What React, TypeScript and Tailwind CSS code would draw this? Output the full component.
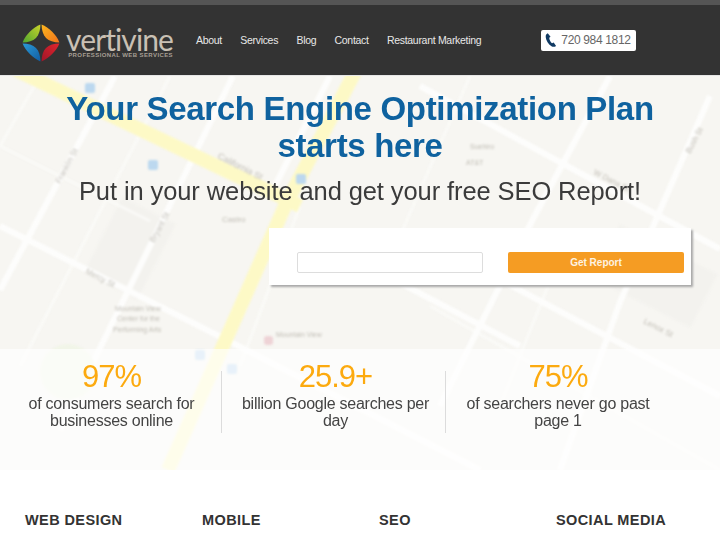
const navLinks = ["About", "Services", "Blog", "Contact", "Restaurant Marketing"];

const stats = [
  { value: "97%", label: "of consumers search for businesses online", box: "w-[222px] border-r pl-[2px]" },
  { value: "25.9+", label: "billion Google searches per day", box: "w-[224px] border-r pl-[4px]" },
  { value: "75%", label: "of searchers never go past page 1", box: "w-[226px] pr-[2px]" },
];

const services = ["WEB DESIGN", "MOBILE", "SEO", "SOCIAL MEDIA"];

const streets = [
  "M115 0 L0 214",
  "M233 0 L60 354",
  "M0 150 L213 257 L480 394",
  "M420 10 L720 173",
  "M493 200 L720 320",
  "M610 0 L533 143 L440 330",
  "M710 20 L620 226 L560 394",
  "M330 0 L270 120",
  "M330 170 L520 270",
];

const thinStreets = [
  "M40 0 L0 70",
  "M170 0 L20 290",
  "M0 70 L150 145",
  "M300 130 L240 290",
  "M470 0 L400 160",
  "M560 180 L500 330",
  "M430 230 L720 394",
];

const mapLabels = [
  { text: "California St", x: 217, y: 82, r: 27, size: 9 },
  { text: "Franklin St", x: 60, y: 108, r: -62, size: 8 },
  { text: "Bryant St", x: 154, y: 167, r: -62, size: 8 },
  { text: "Mercy St", x: 85, y: 197, r: 27, size: 8 },
  { text: "Castro", x: 222, y: 146, r: 0, size: 8 },
  { text: "Mountain View", x: 115, y: 235, r: 0, size: 7 },
  { text: "Center for the", x: 117, y: 245, r: 0, size: 7 },
  { text: "Performing Arts", x: 113, y: 256, r: 0, size: 7 },
  { text: "Mountain View", x: 276, y: 261, r: 0, size: 7 },
  { text: "Suehiro", x: 470, y: 73, r: 0, size: 7 },
  { text: "AT&T", x: 466, y: 89, r: 0, size: 7 },
  { text: "W Dana St", x: 593, y: 98, r: 27, size: 8 },
  { text: "Bush St", x: 690, y: 78, r: -62, size: 8 },
  { text: "Lenox St", x: 643, y: 247, r: 27, size: 8 },
];

const markers = [
  { x: 85, y: 7 },
  { x: 148, y: 84 },
  { x: 296, y: 98 },
  { x: 195, y: 274 },
  { x: 227, y: 288 },
];

function MapBackground() {
  return (
    <svg viewBox="0 0 720 394" className="absolute inset-0 h-full w-full" aria-hidden="true">
      <rect width="720" height="394" fill="#f7f6f2" />
      <g filter="blur(1.3px)">
        <rect x="100" y="130" width="60" height="85" fill="#f3f2ee" transform="rotate(27 130 172)" />
        <rect x="600" y="170" width="110" height="60" fill="#f3f2ee" transform="rotate(27 655 200)" />
        <g stroke="#fafaf7" strokeWidth="3" fill="none">
          {thinStreets.map((d) => (
            <path key={d} d={d} />
          ))}
        </g>
        <g stroke="#fdfdfc" strokeWidth="6" fill="none">
          {streets.map((d) => (
            <path key={d} d={d} />
          ))}
        </g>
        <g stroke="#fdf9c6" strokeWidth="14" fill="none">
          <path d="M16 -6 L300 130" />
          <path d="M356 -6 L285 130 L168 394" />
        </g>
        {mapLabels.map((l) => (
          <text
            key={l.text + l.x}
            x={l.x}
            y={l.y}
            fontSize={l.size}
            fill="#c0bdb5"
            fontFamily="'Liberation Sans', sans-serif"
            transform={`rotate(${l.r} ${l.x} ${l.y})`}
          >
            {l.text}
          </text>
        ))}
        {markers.map((m) => (
          <rect key={m.x} x={m.x} y={m.y} width="10" height="10" rx="2" fill="#bcd8ef" />
        ))}
        <rect x="264" y="260" width="9" height="9" rx="3" fill="#eed3d6" />
        <circle cx="68" cy="296" r="28" fill="#f1f5e8" />
      </g>
    </svg>
  );
}

function Logo() {
  return (
    <div className="flex items-center pt-[4px]">
      <svg width="38" height="38" viewBox="0 0 38 38" aria-hidden="true">
        <defs>
          <linearGradient id="petalGreen" x1="0" y1="1" x2="1" y2="0">
            <stop offset="0" stopColor="#4fa62f" />
            <stop offset="1" stopColor="#c9d32b" />
          </linearGradient>
          <linearGradient id="petalOrange" x1="0" y1="0" x2="1" y2="1">
            <stop offset="0" stopColor="#fbb61e" />
            <stop offset="1" stopColor="#f2731c" />
          </linearGradient>
          <linearGradient id="petalBlue" x1="0" y1="0" x2="1" y2="1">
            <stop offset="0" stopColor="#2a9ad6" />
            <stop offset="1" stopColor="#125da3" />
          </linearGradient>
          <linearGradient id="petalRed" x1="1" y1="0" x2="0" y2="1">
            <stop offset="0" stopColor="#e0252d" />
            <stop offset="1" stopColor="#a01628" />
          </linearGradient>
        </defs>
        <path d="M18.4 .6 C11 3.5 3.5 11 .6 18.4 C6 18.4 11 17 14 14 C17 11 18.4 6 18.4 .6 Z" fill="url(#petalGreen)" />
        <path d="M19.6 .6 C27 3.5 34.5 11 37.4 18.4 C32 18.4 27 17 24 14 C21 11 19.6 6 19.6 .6 Z" fill="url(#petalOrange)" />
        <path d="M.6 19.6 C3.5 27 11 34.5 18.4 37.4 C18.4 32 17 27 14 24 C11 21 6 19.6 .6 19.6 Z" fill="url(#petalBlue)" />
        <path d="M37.4 19.6 C34.5 27 27 34.5 19.6 37.4 C19.6 32 21 27 24 24 C27 21 32 19.6 37.4 19.6 Z" fill="url(#petalRed)" />
      </svg>
      <div className="ml-[4px] flex w-[109px] flex-col items-end">
        <div className="font-['Lato',sans-serif] text-[30px] leading-[22px] tracking-[-0.9px] text-[#c9c0b4]">vertivine</div>
        <div className="mt-[2px] font-['Liberation_Sans',sans-serif] text-[6px] leading-[7px] font-bold tracking-[0.4px] whitespace-nowrap text-[#a79f94]">
          PROFESSIONAL WEB SERVICES
        </div>
      </div>
    </div>
  );
}

export default function App() {
  return (
    <main className="min-h-screen overflow-hidden bg-white font-['Liberation_Sans',Arial,sans-serif]">
      <div className="h-[5px] bg-[#555555]" />
      <header className="flex h-[71px] items-center border-b border-[#e6e6e6] bg-[#333333] pt-[2px] pl-[22px]">
        <Logo />
        <nav className="ml-[23px] flex gap-[18.3px]">
          {navLinks.map((link) => (
            <a key={link} className="text-[10.5px] tracking-[-0.3px] text-[#e8e8e8]">
              {link}
            </a>
          ))}
        </nav>
        <div className="mb-[2px] ml-[60px] flex h-[21px] w-[95px] items-center rounded-[2px] bg-white pl-[4px]">
          <svg width="12" height="16" viewBox="0 0 13 16" aria-hidden="true">
            <path
              d="M3 .8 C1.2 1.6 .6 3 .8 5 C1.2 8.6 3.6 12.6 7 14.8 C8.6 15.6 10.4 15.6 12 14.4 L9.4 10.8 L7.6 11.6 C6 10.4 4.6 7.6 4.6 5.6 L6 4.6 Z"
              fill="#103a63"
            />
          </svg>
          <span className="ml-[4px] text-[12px] tracking-[-0.35px] text-[#666666]">720 984 1812</span>
        </div>
      </header>

      <section className="relative h-[394px]">
        <MapBackground />
        <div className="relative flex h-[273px] flex-col">
          <h1 className="pt-[14px] text-center text-[33px] leading-[37px] font-bold tracking-[-0.32px] text-[#0f629f]">
            Your Search Engine Optimization Plan
            <br />
            starts here
          </h1>
          <p className="mt-[11px] text-center text-[25.5px] leading-[32px] tracking-[-0.1px] text-[#3b3b3b]">
            Put in your website and get your free SEO Report!
          </p>
          <div className="mt-[21px] ml-[269px] flex h-[57px] w-[422px] items-center gap-[25px] bg-white pt-[12px] pl-[28px] shadow-[2px_2px_2px_#a8a8a8]">
            <input type="text" className="h-[21px] w-[186px] rounded-[2px] border border-[#dddddd] bg-white" />
            <button type="button" className="h-[21px] w-[176px] rounded-[2px] bg-[#f59c23] text-[10px] font-bold text-[#fdf3e2]">
              Get Report
            </button>
          </div>
        </div>
        <div className="relative flex h-[121px] bg-white/65 pt-[22px]">
          {stats.map((stat) => (
            <div key={stat.value} className={`h-[62px] border-[#dcdcdc] text-center ${stat.box}`}>
              <div className="text-[31px] leading-[10px] tracking-[-1px] text-[#fcaa0f]">
                <span className="relative top-[1px]">{stat.value}</span>
              </div>
              <p className="mx-auto mt-[14px] w-[206px] text-[16px] leading-[17px] tracking-[-0.25px] text-[#444444]">{stat.label}</p>
            </div>
          ))}
        </div>
      </section>

      <section className="grid grid-cols-[177px_177px_177px_177px] pt-[42px] pl-[25px]">
        {services.map((service) => (
          <h2 key={service} className="text-[14.5px] leading-[16px] font-bold tracking-[0.4px] text-[#333333]">
            {service}
          </h2>
        ))}
      </section>
    </main>
  );
}
